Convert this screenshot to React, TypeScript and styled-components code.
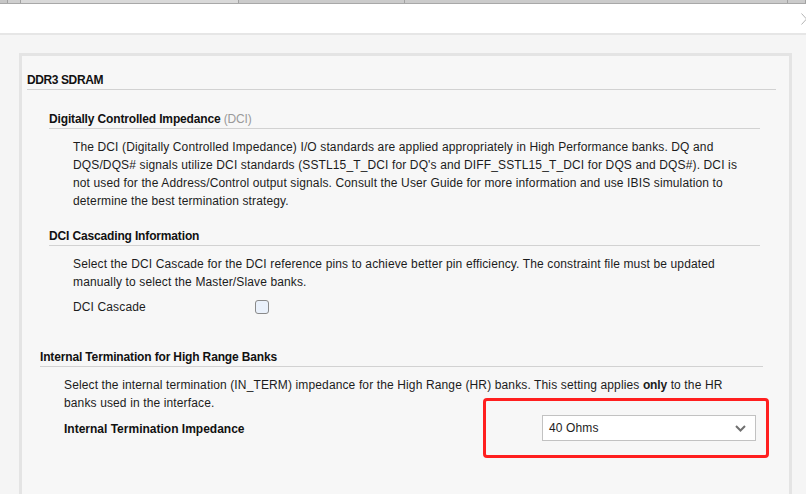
import React from "react";
import styled, { createGlobalStyle } from "styled-components";

const GlobalStyle = createGlobalStyle`
  html, body {
    margin: 0;
    padding: 0;
    background: #f5f5f5;
  }
  body {
    font-family: "Liberation Sans", Arial, sans-serif;
    font-size: 12px;
    color: #1c1c1c;
  }
`;

const Page = styled.div`
  width: 806px;
  height: 494px;
  overflow: hidden;
  display: flex;
  flex-direction: column;
  background: #f5f5f5;
`;

const TabStrip = styled.div`
  display: flex;
  height: 3px;
  background: #cbcbcb;
  border-bottom: 1px solid #a8a8a8;
  flex-shrink: 0;
`;

const Tab = styled.div<{ $w: number; $bg?: string }>`
  width: ${(p) => p.$w}px;
  background: ${(p) => p.$bg ?? "#cbcbcb"};
  border-right: 1px solid #a2a2a2;
  box-sizing: border-box;
`;

const Header = styled.div`
  height: 29px;
  background: #ffffff;
  border-bottom: 2px solid #e6e6e6;
  display: flex;
  align-items: center;
  justify-content: flex-end;
  flex-shrink: 0;
`;

const Chevron = styled.svg`
  width: 6px;
  height: 12px;
  margin-right: -1px;
`;

const Content = styled.div`
  flex: 1;
  display: flex;
  padding: 18px 14px 0 19px;
  min-height: 0;
`;

const Panel = styled.div`
  flex: 1;
  background: #f7f7f7;
  border: 3px solid #e4e4e4;
  border-bottom: none;
  padding: 15px 0 0 5px;
`;

const GroupTitle = styled.div`
  font-weight: bold;
  line-height: 18px;
  letter-spacing: -0.4px;
  color: #111;
  border-bottom: 1px solid #d2d2d2;
  margin-right: 13px;
`;

const Section = styled.div<{ $left: number; $right: number; $top: number }>`
  margin: ${(p) => p.$top}px ${(p) => p.$right}px 0 ${(p) => p.$left}px;
`;

const Heading = styled.div`
  font-weight: bold;
  line-height: 18px;
  letter-spacing: -0.15px;
  color: #111;
  border-bottom: 1px solid #d2d2d2;
`;

const Muted = styled.span`
  font-weight: normal;
  color: #9a9a9a;
`;

const Body = styled.div`
  padding-left: 24px;
`;

const Para = styled.p`
  margin: 9px 0 0 0;
  line-height: 18px;
  letter-spacing: 0.13px;
  color: #1c1c1c;

  b {
    letter-spacing: -0.1px;
  }
`;

const FieldRow = styled.div<{ $top: number }>`
  display: flex;
  align-items: center;
  margin-top: ${(p) => p.$top}px;
  min-height: 18px;
`;

const FieldLabel = styled.div<{ $w: number; $bold?: boolean }>`
  width: ${(p) => p.$w}px;
  flex-shrink: 0;
  line-height: 18px;
  padding-top: 1px;
  font-weight: ${(p) => (p.$bold ? "bold" : "normal")};
  letter-spacing: ${(p) => (p.$bold ? "0" : "0.13px")};
  color: ${(p) => (p.$bold ? "#111" : "#1c1c1c")};
`;

const CheckBox = styled.span`
  display: inline-block;
  width: 14px;
  height: 14px;
  box-sizing: border-box;
  border: 1px solid #8a8a8a;
  border-radius: 3px;
  background: #eaf1fb;
`;

const SelectWrap = styled.div`
  position: relative;
  width: 214px;
`;

const SelectBox = styled.div`
  height: 26px;
  box-sizing: border-box;
  background: #ffffff;
  border: 1px solid #c2c2c2;
  display: flex;
  align-items: center;
  justify-content: space-between;
  padding: 0 9px 0 6px;
  letter-spacing: 0.13px;
  color: #1c1c1c;
`;

const Highlight = styled.div`
  position: absolute;
  top: -17px;
  left: -59px;
  right: -13px;
  bottom: -17px;
  border: 3px solid #ff1f1f;
  border-radius: 4px;
  pointer-events: none;
`;

export default function App() {
  return (
    <>
      <GlobalStyle />
      <Page>
        <TabStrip>
          <Tab $w={8} $bg="#c6c6c6" />
          <Tab $w={13} $bg="#cfcfcf" />
          <Tab $w={218} $bg="#d9d9d9" />
          <Tab $w={166} />
          <Tab $w={383} />
          <Tab $w={18} />
        </TabStrip>
        <Header>
          <Chevron viewBox="0 0 6 12">
            <path d="M0.5 0.5 L5.5 6 L0.5 11.5" fill="none" stroke="#b4b4b4" strokeWidth="1" />
          </Chevron>
        </Header>
        <Content>
          <Panel>
            <GroupTitle>DDR3 SDRAM</GroupTitle>
            <Section $left={22} $right={29} $top={20}>
              <Heading>
                Digitally Controlled Impedance <Muted>(DCI)</Muted>
              </Heading>
              <Body>
                <Para>
                  The DCI (Digitally Controlled Impedance) I/O standards are applied appropriately in High Performance banks. DQ and
                  <br />
                  DQS/DQS# signals utilize DCI standards (SSTL15_T_DCI for DQ's and DIFF_SSTL15_T_DCI for DQS and DQS#). DCI is
                  <br />
                  not used for the Address/Control output signals. Consult the User Guide for more information and use IBIS simulation to
                  <br />
                  determine the best termination strategy.
                </Para>
              </Body>
            </Section>
            <Section $left={22} $right={29} $top={17}>
              <Heading>DCI Cascading Information</Heading>
              <Body>
                <Para>
                  Select the DCI Cascade for the DCI reference pins to achieve better pin efficiency. The constraint file must be updated
                  <br />
                  manually to select the Master/Slave banks.
                </Para>
                <FieldRow $top={6}>
                  <FieldLabel $w={182}>DCI Cascade</FieldLabel>
                  <CheckBox />
                </FieldRow>
              </Body>
            </Section>
            <Section $left={13} $right={26} $top={32}>
              <Heading>Internal Termination for High Range Banks</Heading>
              <Body>
                <Para>
                  Select the internal termination (IN_TERM) impedance for the High Range (HR) banks. This setting applies <b>only</b> to the HR
                  <br />
                  banks used in the interface.
                </Para>
                <FieldRow $top={3}>
                  <FieldLabel $w={478} $bold>
                    Internal Termination Impedance
                  </FieldLabel>
                  <SelectWrap>
                    <SelectBox>
                      <span>40 Ohms</span>
                      <svg width="11" height="7" viewBox="0 0 11 7">
                        <path d="M1 1 L5.5 5.5 L10 1" fill="none" stroke="#707070" strokeWidth="2" />
                      </svg>
                    </SelectBox>
                    <Highlight />
                  </SelectWrap>
                </FieldRow>
              </Body>
            </Section>
          </Panel>
        </Content>
      </Page>
    </>
  );
}
